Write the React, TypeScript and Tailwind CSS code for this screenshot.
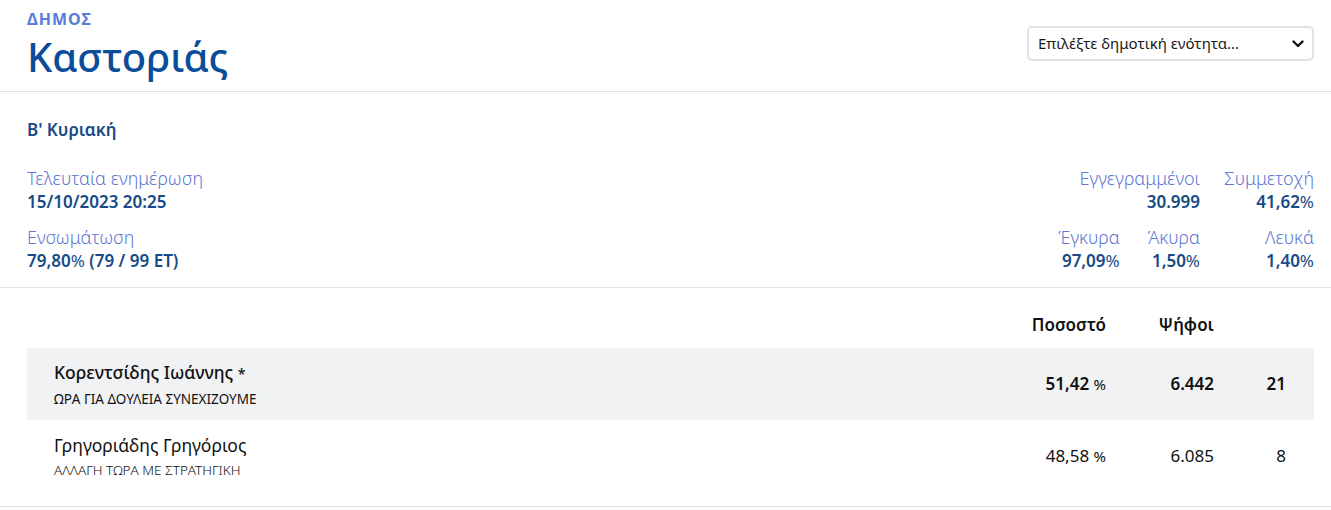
import React from "react";

const font = { fontFamily: '"Noto Sans", "Open Sans", sans-serif' };

function Stat({ label, value, pct, className = "" }: { label: string; value: string; pct?: boolean; className?: string }) {
  return (
    <div className={"flex flex-col items-end " + className}>
      <div className="text-[18px] leading-[24px] font-light text-[#5f78d2] whitespace-nowrap">{label}</div>
      <div className="text-[17px] leading-[24px] font-semibold text-[#174a86] whitespace-nowrap">
        {value}
        {pct && <span className="font-normal">%</span>}
      </div>
    </div>
  );
}

export default function App() {
  return (
    <div className="w-[1331px] min-h-[510px] bg-white" style={font}>
      {/* Header */}
      <div className="flex items-start justify-between pl-[27px] pr-[17px] pt-[8.5px] pb-[12px] border-b border-[#dfe1e7]">
        <div>
          <div className="text-[16px] leading-[20px] font-bold tracking-[0.06em] text-[#5a7cd9]">ΔΗΜΟΣ</div>
          <div className="mt-[6.5px] text-[40px] leading-[44px] font-medium text-[#0b4d99]">Καστοριάς</div>
        </div>
        <div className="mt-[17.5px] w-[287px] h-[35px] border-2 border-[#dfe2e8] rounded-[5px] flex items-center justify-between pl-[9px] pr-[8px]">
          <span className="text-[15px] text-[#1a1a1a]">Επιλέξτε δημοτική ενότητα...</span>
          <svg width="12" height="8" viewBox="0 0 12 8" fill="none">
            <path d="M1.5 1.5 L6 6 L10.5 1.5" stroke="#111" strokeWidth="2.4" strokeLinecap="round" strokeLinejoin="round" />
          </svg>
        </div>
      </div>

      {/* Info */}
      <div className="pl-[27px] pr-[17px] pt-[26px] pb-[14px] border-b border-[#dfe1e7]">
        <div className="text-[17px] leading-[24px] font-semibold text-[#174a86]">Β' Κυριακή</div>
        <div className="mt-[24px] flex justify-between">
          <div className="flex flex-col gap-[11px]">
            <div>
              <div className="text-[18px] leading-[24px] font-light text-[#5f78d2]">Τελευταία ενημέρωση</div>
              <div className="text-[17px] leading-[24px] font-semibold text-[#174a86]">15/10/2023 20:25</div>
            </div>
            <div>
              <div className="text-[18px] leading-[24px] font-light text-[#5f78d2]">Ενσωμάτωση</div>
              <div className="text-[17px] leading-[24px] font-semibold text-[#174a86]">
                79,80<span className="font-normal">%</span> (79 / 99 ΕΤ)
              </div>
            </div>
          </div>
          <div className="grid grid-cols-[auto_auto_86px] gap-x-[28px] gap-y-[11px]">
            <Stat label="Εγγεγραμμένοι" value="30.999" className="col-span-2" />
            <Stat label="Συμμετοχή" value="41,62" pct />
            <Stat label="Έγκυρα" value="97,09" pct />
            <Stat label="Άκυρα" value="1,50" pct />
            <Stat label="Λευκά" value="1,40" pct />
          </div>
        </div>
      </div>

      {/* Results table */}
      <div className="pl-[27px] pr-[17px] pt-[25px] pb-[14px] border-b border-[#dfe1e7] text-[#111]">
        <div className="grid grid-cols-[1fr_120px_108px_72px] pr-[28px] text-[17px] leading-[24px] font-semibold">
          <div></div>
          <div className="text-right">Ποσοστό</div>
          <div className="text-right">Ψήφοι</div>
          <div></div>
        </div>
        <div className="mt-[11px]">
          <div className="grid grid-cols-[1fr_120px_108px_72px] items-center pl-[27px] pr-[28px] h-[72px] bg-[#f1f2f4]">
            <div>
              <div className="text-[17.5px] leading-[24px] font-medium">
                Κορεντσίδης Ιωάννης <span className="text-[14px]">*</span>
              </div>
              <div className="mt-[4px] text-[13.5px] leading-[18px] font-normal">ΩΡΑ ΓΙΑ ΔΟΥΛΕΙΑ ΣΥΝΕΧΙΖΟΥΜΕ</div>
            </div>
            <div className="text-right text-[17px] font-semibold">
              51,42 <span className="text-[15px] font-normal">%</span>
            </div>
            <div className="text-right text-[17px] font-semibold">6.442</div>
            <div className="text-right text-[17px] font-semibold">21</div>
          </div>
          <div className="grid grid-cols-[1fr_120px_108px_72px] items-center pl-[27px] pr-[28px] h-[72px]">
            <div>
              <div className="text-[17.5px] leading-[24px] font-normal">Γρηγοριάδης Γρηγόριος</div>
              <div className="mt-[4px] text-[13.5px] leading-[18px] font-light">ΑΛΛΑΓΗ ΤΩΡΑ ΜΕ ΣΤΡΑΤΗΓΙΚΗ</div>
            </div>
            <div className="text-right text-[17px] font-normal">
              48,58 <span className="text-[15px]">%</span>
            </div>
            <div className="text-right text-[17px] font-normal">6.085</div>
            <div className="text-right text-[17px] font-normal">8</div>
          </div>
        </div>
      </div>
    </div>
  );
}
